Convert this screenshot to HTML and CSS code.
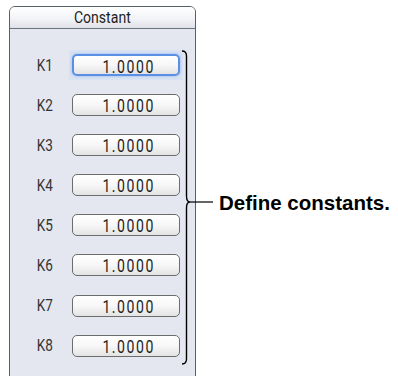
FILE: index.html
```html
<!DOCTYPE html>
<html lang="en">
<head>
  <meta charset="UTF-8" />
  <title>Constant</title>
  <link rel="stylesheet" href="styles.css">
</head>
<body>
  <div class="page">
    <div class="panel">
      <div class="panel-head"><span class="narrow">Constant</span></div>
      <div class="panel-body">
        <div class="row focused"><span class="label"><span class="narrow">K1</span></span><span class="field"><span class="narrow">1.0000</span></span></div>
        <div class="row"><span class="label"><span class="narrow">K2</span></span><span class="field"><span class="narrow">1.0000</span></span></div>
        <div class="row"><span class="label"><span class="narrow">K3</span></span><span class="field"><span class="narrow">1.0000</span></span></div>
        <div class="row"><span class="label"><span class="narrow">K4</span></span><span class="field"><span class="narrow">1.0000</span></span></div>
        <div class="row"><span class="label"><span class="narrow">K5</span></span><span class="field"><span class="narrow">1.0000</span></span></div>
        <div class="row"><span class="label"><span class="narrow">K6</span></span><span class="field"><span class="narrow">1.0000</span></span></div>
        <div class="row"><span class="label"><span class="narrow">K7</span></span><span class="field"><span class="narrow">1.0000</span></span></div>
        <div class="row"><span class="label"><span class="narrow">K8</span></span><span class="field"><span class="narrow">1.0000</span></span></div>
      </div>
    </div>

    <!-- callout brace over the list -->
    <svg class="brace" width="40" height="320" viewBox="0 0 40 320">
      <path d="M0 1 Q4.5 1 4.5 6 L4.5 146 Q4.5 152 8 152 Q4.5 152 4.5 158 L4.5 309 Q4.5 314 0 314" fill="none" stroke="#000" stroke-width="1.4"/>
      <line x1="8" y1="152" x2="31" y2="152" stroke="#000" stroke-width="1.2"/>
    </svg>
    <div class="note">Define constants.</div>
  </div>
</body>
</html>
```

FILE: styles.css
```css
body {
  margin: 0;
  background: #ffffff;
  font-family: Roboto, "Liberation Sans", sans-serif;
}
.page {
  position: relative;
  width: 398px;
  height: 376px;
  overflow: hidden;
}
.narrow {
  display: inline-block;
  transform: scaleX(0.82);
}
.panel {
  margin: 6px 0 0 9px;
  width: 185px;
  height: 380px;
  border: 1px solid #56606c;
  border-radius: 6px 6px 0 0;
  background: #e4e7ef;
}
.panel-head {
  height: 21px;
  line-height: 21px;
  text-align: center;
  font-size: 16px;
  color: #1e1e1e;
  border-bottom: 1px solid #6a7380;
  border-radius: 5px 5px 0 0;
  background: linear-gradient(#ffffff, #f3f4f7 55%, #e0e2e8);
}
.panel-head .narrow {
  transform: scaleX(0.88);
}
.panel-body {
  padding-top: 21px;
}
.row {
  display: flex;
  align-items: center;
  height: 30px;
  margin-bottom: 10.1px;
}
.label {
  width: 62px;
  padding-left: 25px;
  box-sizing: border-box;
  font-size: 16.5px;
  color: #333;
}
.field {
  width: 108px;
  height: 22px;
  line-height: 21px;
  box-sizing: border-box;
  border: 1px solid #6c6c6c;
  border-radius: 5px;
  background: linear-gradient(#ffffff, #f7f7f7 50%, #e3e3e3);
  text-align: center;
  padding-left: 6px;
  font-size: 18px;
  color: #1e1e1e;
}
.field .narrow {
  letter-spacing: 2px;
  transform: scaleX(0.78);
}
.focused {
  background: #d9e2f1;
  margin-left: 59px;
  width: 114px;
  padding-left: 3px;
  box-sizing: border-box;
}
.focused .label {
  margin-left: -62px;
}
.focused .field {
  border: 2px solid #5b8fe6;
  box-shadow: 0 0 3px #8fb4f0;
}
.brace {
  position: absolute;
  left: 182px;
  top: 50px;
}
.note {
  position: absolute;
  left: 219px;
  top: 191px;
  font-family: "Liberation Sans", Arial, sans-serif;
  font-weight: bold;
  font-size: 20.5px;
  color: #000;
}
```
